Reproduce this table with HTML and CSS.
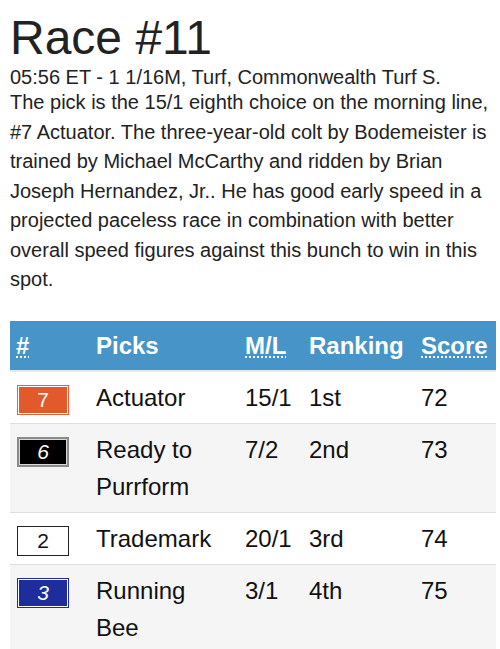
FILE: index.html
```html
<!DOCTYPE html>
<html lang="en">
<head>
<meta charset="utf-8">
<title>Race #11</title>
<link rel="stylesheet" href="styles.css">
</head>
<body>
<div class="page">
  <h1 class="race-title">Race #11</h1>
  <div class="race-meta">05:56 ET - 1 1/16M, Turf, Commonwealth Turf S.</div>
  <p class="race-analysis">The pick is the 15/1 eighth choice on the morning line, #7 Actuator. The three-year-old colt by Bodemeister is trained by Michael McCarthy and ridden by Brian Joseph Hernandez, Jr.. He has good early speed in a projected paceless race in combination with better overall speed figures against this bunch to win in this spot.</p>
  <table class="picks">
    <colgroup>
      <col class="c-num"><col class="c-name"><col class="c-ml"><col class="c-rank"><col class="c-score">
    </colgroup>
    <thead>
      <tr>
        <th><abbr title="Program Number">#</abbr></th>
        <th class="name">Picks</th>
        <th><abbr title="Morning Line">M/L</abbr></th>
        <th>Ranking</th>
        <th><abbr title="Score">Score</abbr></th>
      </tr>
    </thead>
    <tbody>
      <tr>
        <td><span class="saddle s7">7</span></td>
        <td class="name">Actuator</td>
        <td>15/1</td>
        <td>1st</td>
        <td>72</td>
      </tr>
      <tr>
        <td><span class="saddle s6">6</span></td>
        <td class="name">Ready to Purrform</td>
        <td>7/2</td>
        <td>2nd</td>
        <td>73</td>
      </tr>
      <tr>
        <td><span class="saddle s2">2</span></td>
        <td class="name">Trademark</td>
        <td>20/1</td>
        <td>3rd</td>
        <td>74</td>
      </tr>
      <tr>
        <td><span class="saddle s3">3</span></td>
        <td class="name">Running Bee</td>
        <td>3/1</td>
        <td>4th</td>
        <td>75</td>
      </tr>
    </tbody>
  </table>
</div>
</body>
</html>
```

FILE: styles.css
```css
html, body {
  margin: 0;
  padding: 0;
  background: #fff;
}

body {
  font-family: "Liberation Sans", Arial, sans-serif;
  color: #222;
}

.page {
  padding: 10px 4px 0 10px;
}

.race-title {
  margin: 0;
  font-size: 48px;
  font-weight: normal;
  line-height: 55px;
}

.race-meta {
  margin-top: 1px;
  font-size: 20px;
  line-height: 22px;
}

.race-analysis {
  margin: 0;
  font-size: 20px;
  line-height: 29.5px;
}

.picks {
  margin-top: 26px;
  width: 486px;
  border-collapse: collapse;
  table-layout: fixed;
  font-size: 24px;
  line-height: 37px;
}

.c-num { width: 80px; }
.c-name { width: 149px; }
.c-ml { width: 64px; }
.c-rank { width: 112px; }
.c-score { width: 81px; }

.picks th {
  background: #4694c8;
  color: #fff;
  font-weight: bold;
  text-align: left;
  padding: 6px 6px;
  border-bottom: 2px solid #e3e9ef;
}

.picks th abbr {
  text-decoration: underline dotted;
  text-decoration-thickness: 2px;
  text-underline-offset: 3px;
  cursor: help;
}

.picks td {
  padding: 7px 6px;
  vertical-align: top;
  color: #111;
}

.picks td.name,
.picks th.name {
  padding-right: 24px;
}

.picks tbody tr + tr td {
  border-top: 1px solid #dedede;
}

.picks tbody tr:nth-child(even) td {
  background: #f5f5f5;
}

.saddle {
  display: block;
  box-sizing: border-box;
  width: 52px;
  height: 30px;
  margin: 6px 0 0 1px;
  font-size: 21px;
  line-height: 28px;
  text-align: center;
  color: #fff;
  border: 1px solid;
  box-shadow: inset 0 0 0 1px #fff;
}

.s7 {
  background: #e25a2c;
  border-color: #e0623a;
}

.s6 {
  background: #000;
  border: 2px solid #8a8a8a;
  line-height: 26px;
  font-style: italic;
  box-shadow: inset 0 0 0 1px #d8d8d8;
}

.s2 {
  background: #fff;
  color: #111;
  border-color: #222;
  box-shadow: none;
}

.s3 {
  background: #1e2d9c;
  border-color: #1e2d9c;
  font-style: italic;
}
```
